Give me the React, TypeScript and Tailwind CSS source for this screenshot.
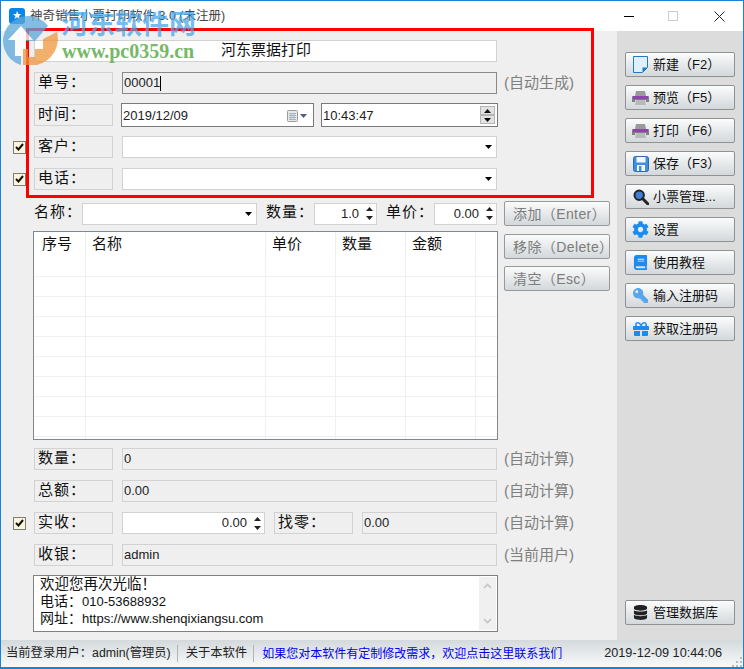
import type { ReactNode } from 'react'
import { FaCog, FaBook, FaKey, FaGift, FaDatabase } from 'react-icons/fa'

const FONT = "font-['Liberation_Sans','Noto_Sans_CJK_SC',sans-serif]"

function Caret({ className = 'text-black' }: { className?: string }) {
  return (
    <svg width="7" height="4" viewBox="0 0 7 4" className={className}>
      <path d="M0 0h7L3.5 4z" fill="currentColor" />
    </svg>
  )
}

function SpinArrows() {
  return (
    <div className="flex flex-col gap-[5px]">
      <svg width="7" height="4" viewBox="0 0 7 4"><path d="M0 4h7L3.5 0z" fill="#222" /></svg>
      <svg width="7" height="4" viewBox="0 0 7 4"><path d="M0 0h7L3.5 4z" fill="#222" /></svg>
    </div>
  )
}

function CheckBox() {
  return (
    <div className="flex h-[13px] w-[13px] items-center justify-center border border-[#7c7c7c] bg-[#fbf6d8]">
      <svg width="9" height="8" viewBox="0 0 9 8">
        <path d="M1 4l2.5 2.5L8 1" fill="none" stroke="#111" strokeWidth="2" />
      </svg>
    </div>
  )
}

function Label({ text, className = 'w-[79px]' }: { text: string; className?: string }) {
  return (
    <div className={`flex h-[22px] items-center border border-[#d2d2d2] pb-[3px] pl-[3px] text-[15px] leading-[18px] tracking-[1px] text-[#111] ${className}`}>
      {text}
    </div>
  )
}

function ReadOnly({ text = '', className = 'w-[375px]' }: { text?: string; className?: string }) {
  return (
    <div className={`flex h-[22px] items-center border border-[#d2d2d2] bg-[#efefef] pl-[1px] text-[13px] text-[#222] ${className}`}>
      {text}
    </div>
  )
}

function Combo({ className = 'w-[375px]' }: { className?: string }) {
  return (
    <div className={`flex h-[22px] items-center justify-end border border-[#d2d2d2] bg-white pr-[4px] ${className}`}>
      <Caret />
    </div>
  )
}

function Spin({ value, className }: { value: string; className: string }) {
  return (
    <div className={`flex h-[22px] items-center justify-end gap-[7px] border border-[#d2d2d2] bg-white pr-[3px] text-[13px] text-[#222] ${className}`}>
      {value}
      <SpinArrows />
    </div>
  )
}

function Hint({ text }: { text: string }) {
  return <span className="ml-[7px] whitespace-nowrap text-[15px] leading-[20px] text-[#808080]">{text}</span>
}

function Row({ check, className, children }: { check?: boolean; className: string; children: ReactNode }) {
  return (
    <div className={`flex items-center ${className}`}>
      <div className="w-[21px] shrink-0">{check && <CheckBox />}</div>
      {children}
    </div>
  )
}

function ActionButton({ text, className }: { text: string; className: string }) {
  return (
    <div className={`flex h-[25px] w-[106px] items-center whitespace-nowrap rounded-[2px] border border-[#979a9c] bg-gradient-to-b from-[#fbfbfb] to-[#d3d8db] pl-[8px] text-[14px] leading-[18px] tracking-[0.4px] text-[#7c7c7c] ${className}`}>
      {text}
    </div>
  )
}

function DocIcon() {
  return (
    <svg width="15" height="17" viewBox="0 0 15 17">
      <path d="M.5.5h14v11l-5 5h-9z" fill="#dff0fd" stroke="#2379c9" />
      <path d="M14.5 11.5l-5 5v-5z" fill="#2379c9" />
    </svg>
  )
}

function PrinterIcon() {
  return (
    <svg width="17" height="14" viewBox="0 0 17 14">
      <path d="M4 0h9l1 5H3z" fill="#9a9a9a" />
      <path d="M1 5h15a1 1 0 0 1 1 1v5h-3V9H3v2H0V6a1 1 0 0 1 1-1z" fill="#7f7f7f" />
      <path d="M1 5h15v3H1z" fill="#8e44ad" />
      <path d="M4 9h9l1 5H3z" fill="#b9b9b9" />
    </svg>
  )
}

function SaveIcon() {
  return (
    <svg width="16" height="16" viewBox="0 0 16 16">
      <rect x=".5" y=".5" width="15" height="15" rx="2" fill="#3f8fe0" stroke="#2a6db5" />
      <path d="M3.5 1h9v5.5h-9z" fill="#f4f8fc" />
      <path d="M4 9h8v6H4z" fill="#f4f8fc" />
      <path d="M6 10h2.5v5H6z" fill="#3f8fe0" />
    </svg>
  )
}

function SearchIcon() {
  return (
    <svg width="16" height="16" viewBox="0 0 16 16">
      <circle cx="6.2" cy="6.2" r="4.7" fill="#3f7fd8" stroke="#222" strokeWidth="2" />
      <path d="M9.8 9.8L15 15" stroke="#222" strokeWidth="3" strokeLinecap="round" />
    </svg>
  )
}

const BLUE = '#1a8cf0'

const sideButtons: { label: string; icon: ReactNode }[] = [
  { label: '新建（F2）', icon: <DocIcon /> },
  { label: '预览（F5）', icon: <PrinterIcon /> },
  { label: '打印（F6）', icon: <PrinterIcon /> },
  { label: '保存（F3）', icon: <SaveIcon /> },
  { label: '小票管理...', icon: <SearchIcon /> },
  { label: '设置', icon: <FaCog size={17} color={BLUE} /> },
  { label: '使用教程', icon: <FaBook size={15} color={BLUE} /> },
  { label: '输入注册码', icon: <FaKey size={15} color="#5aa6ea" className="-scale-x-100" /> },
  { label: '获取注册码', icon: <FaGift size={16} color={BLUE} /> },
]

function SideButton({ label, icon }: { label: string; icon: ReactNode }) {
  return (
    <div className="flex h-[25px] w-[110px] items-center rounded-[2px] border border-[#8f9294] bg-gradient-to-b from-[#fbfcfc] to-[#d3d8db] text-[13px] text-[#111]">
      <div className="flex w-[27px] shrink-0 justify-center pl-[2px]">{icon}</div>
      <span className="whitespace-nowrap">{label}</span>
    </div>
  )
}

function Watermark() {
  return (
    <div className="pointer-events-none absolute left-0 top-[6px] flex">
      <svg width="58" height="50" viewBox="0 0 58 50" className="mt-[8px] opacity-75">
        <path d="M47 11A25 25 0 1 0 20 50V26H34z" fill="#5aa8dc" />
        <path d="M20 11L7 25h7v16h11V25h7z" fill="#ffffff" />
        <path d="M22 50V34h5v8h7V34h8V24l14-7a27 27 0 0 1-20 33z" fill="#f0963c" />
      </svg>
      <div className="ml-[2px] flex flex-col">
        <span className="mt-[2px] h-[32px] whitespace-nowrap font-['Liberation_Serif','Noto_Sans_CJK_SC',serif] text-[27px] font-bold leading-[32px] text-[#45a8ea] opacity-75">
          河东软件网
        </span>
        <span className="ml-[1px] whitespace-nowrap font-['Liberation_Serif',serif] text-[20px] font-bold leading-[20px] text-[#77b868]">
          www.pc0359.cn
        </span>
      </div>
    </div>
  )
}

export default function App() {
  const rows = Array.from({ length: 10 })
  return (
    <div className={`relative flex h-[669px] w-[744px] flex-col overflow-hidden border border-b-2 border-[#1683d8] bg-white ${FONT}`}>
      <div className="flex h-[30px] shrink-0 items-center bg-white pl-[8px]">
        <div className="flex h-[16px] w-[16px] items-center justify-center rounded-[3px] bg-[#0a84e8] text-[9px] text-white">★</div>
        <span className="ml-[5px] text-[12.5px] text-[#444]">神奇销售小票打印软件 3.0 (未注册)</span>
        <div className="ml-auto flex items-center">
          <div className="h-px w-[10px] bg-black" />
          <div className="ml-[34px] h-[10px] w-[10px] border border-[#cccccc]" />
          <svg width="11" height="11" viewBox="0 0 11 11" className="ml-[36px] mr-[18px]">
            <path d="M.5.5l10 10M10.5.5l-10 10" stroke="#222" strokeWidth="1" />
          </svg>
        </div>
      </div>

      <div className="flex min-h-0 flex-1">
        <div className="w-[616px] shrink-0 bg-[#efefef] pl-[12px] pt-[9px]">
          <Row className="">
            <div className="flex h-[22px] w-[463px] items-center border border-[#d2d2d2] bg-white pb-[3px] pl-[186px] text-[15px] leading-[18px] text-[#111]">
              河东票据打印
            </div>
          </Row>

          <Row className="mt-[10px]">
            <Label text="单号：" />
            <div className="ml-[9px] flex h-[22px] w-[375px] items-center border border-[#8a8a8a] bg-[#efefef] pl-[1px] text-[13px] text-[#222]">
              00001<span className="h-[15px] w-px bg-black" />
            </div>
            <Hint text="(自动生成)" />
          </Row>

          <Row className="mt-[9px]">
            <Label text="时间：" />
            <div className="ml-[8px] flex h-[24px] w-[193px] items-center border border-[#7a7a7a] bg-white pl-[1px] pt-[1px] text-[13px] text-[#222]">
              2019/12/09
              <svg width="11" height="12" viewBox="0 0 11 12" className="ml-auto">
                <rect x=".5" y=".5" width="10" height="11" rx="1" fill="#e8e8e8" stroke="#9a9a9a" />
                <path d="M2 3.5h7M2 5.5h7M2 7.5h7M2 9.5h7M4 3v7M7 3v7" stroke="#a8b4c4" strokeWidth="1" />
              </svg>
              <Caret className="ml-[2px] mr-[6px] text-[#4e5f80]" />
            </div>
            <div className="ml-[7px] flex h-[24px] w-[177px] items-center justify-between border border-[#7a7a7a] bg-white pl-[1px] pr-[2px] text-[13px] text-[#222]">
              <span className="pt-[1px]">10:43:47</span>
              <div className="flex flex-col">
                <div className="flex h-[9px] w-[15px] items-center justify-center border border-[#b4b4b4] bg-[#e2e2e2]">
                  <svg width="7" height="4" viewBox="0 0 7 4"><path d="M0 4h7L3.5 0z" fill="#111" /></svg>
                </div>
                <div className="flex h-[9px] w-[15px] items-center justify-center border border-[#b4b4b4] bg-[#e2e2e2]">
                  <Caret />
                </div>
              </div>
            </div>
          </Row>

          <Row check className="mt-[9px]">
            <Label text="客户：" />
            <Combo className="ml-[9px] w-[375px]" />
          </Row>

          <Row check className="mt-[10px]">
            <Label text="电话：" />
            <Combo className="ml-[9px] w-[375px]" />
          </Row>

          <Row className="mt-[11px]">
            <span className="w-[48px] whitespace-nowrap pb-[3px] text-[15px] leading-[18px] tracking-[1px] text-[#111]">名称：</span>
            <Combo className="w-[175px]" />
            <span className="ml-[9px] w-[48px] whitespace-nowrap pb-[3px] text-[15px] leading-[18px] tracking-[1px] text-[#111]">数量：</span>
            <Spin value="1.0" className="w-[63px]" />
            <span className="ml-[9px] w-[48px] whitespace-nowrap pb-[3px] text-[15px] leading-[18px] tracking-[1px] text-[#111]">单价：</span>
            <Spin value="0.00" className="w-[63px]" />
            <ActionButton text="添加（Enter）" className="ml-[7px]" />
          </Row>

          <div className="flex">
            <div className="ml-[20px] mt-[5px] h-[209px] w-[465px] overflow-hidden border border-[#80878d] bg-white">
              <div className="grid h-[25px] grid-cols-[52px_180px_70px_70px_70px_22px] text-[15px] text-[#111]">
                {['序号', '名称', '单价', '数量', '金额', ''].map((h, i) => (
                  <div key={i} className={`leading-[24px] ${i === 0 ? 'pl-[8px]' : 'pl-[6px]'} ${i < 5 ? 'border-r border-[#eeeeee]' : ''}`}>
                    {h}
                  </div>
                ))}
              </div>
              {rows.map((_, r) => (
                <div key={r} className="grid h-[20px] grid-cols-[52px_180px_70px_70px_70px_22px] border-b border-[#f0f0f0]">
                  {[0, 1, 2, 3, 4].map((c) => (
                    <div key={c} className="border-r border-[#f0f0f0]" />
                  ))}
                </div>
              ))}
            </div>
            <div className="ml-[6px] flex flex-col gap-[7px] pt-[8px]">
              <ActionButton text="移除（Delete）" className="" />
              <ActionButton text="清空（Esc）" className="" />
            </div>
          </div>

          <Row className="mt-[8px]">
            <Label text="数量：" />
            <ReadOnly text="0" className="ml-[9px] w-[375px]" />
            <Hint text="(自动计算)" />
          </Row>
          <Row className="mt-[10px]">
            <Label text="总额：" />
            <ReadOnly text="0.00" className="ml-[9px] w-[375px]" />
            <Hint text="(自动计算)" />
          </Row>
          <Row check className="mt-[10px]">
            <Label text="实收：" />
            <Spin value="0.00" className="ml-[9px] w-[143px]" />
            <Label text="找零：" className="ml-[9px] w-[79px]" />
            <ReadOnly text="0.00" className="ml-[9px] w-[135px]" />
            <Hint text="(自动计算)" />
          </Row>
          <Row className="mt-[10px]">
            <Label text="收银：" />
            <ReadOnly text="admin" className="ml-[9px] w-[375px]" />
            <Hint text="(当前用户)" />
          </Row>

          <div className="ml-[20px] mt-[9px] flex h-[57px] w-[465px] justify-between border border-[#808080] bg-white pl-[6px]">
            <div className="text-[13px] leading-[17px] text-[#111]">
              <div className="text-[14.5px]">欢迎您再次光临！</div>
              <div><span className="text-[14px]">电话：</span>010-53688932</div>
              <div><span className="text-[14px]">网址：</span>https://www.shenqixiangsu.com</div>
            </div>
            <div className="mr-[1px] mt-[1px] flex h-[53px] w-[17px] flex-col items-center justify-between bg-[#f0f0f0] py-[6px]">
              <svg width="9" height="6" viewBox="0 0 9 6"><path d="M1 5l3.5-3.5L8 5" fill="none" stroke="#c4c4c4" strokeWidth="1.6" /></svg>
              <svg width="9" height="6" viewBox="0 0 9 6"><path d="M1 1l3.5 3.5L8 1" fill="none" stroke="#c4c4c4" strokeWidth="1.6" /></svg>
            </div>
          </div>
        </div>

        <div className="flex flex-1 flex-col bg-[#dcdcdc] pl-[8px] pt-[21px]">
          <div className="flex flex-col gap-[8px]">
            {sideButtons.map((b) => (
              <SideButton key={b.label} label={b.label} icon={b.icon} />
            ))}
          </div>
          <div className="mb-[15px] mt-auto">
            <SideButton label="管理数据库" icon={<FaDatabase size={15} color="#222" />} />
          </div>
        </div>
      </div>

      <div className="relative flex h-[27px] shrink-0 items-center bg-gradient-to-b from-[#d4d9dc] to-[#f8fafa] pl-[5px] text-[12.3px] text-[#222]">
        <span className="whitespace-nowrap">当前登录用户：admin(管理员)</span>
        <div className="ml-[6px] h-[17px] w-px bg-[#b4b4b4]" />
        <span className="ml-[8px] whitespace-nowrap">关于本软件</span>
        <div className="ml-[6px] h-[17px] w-px bg-[#b4b4b4]" />
        <span className="ml-[8px] whitespace-nowrap text-[12px] text-[#0000ee]">如果您对本软件有定制修改需求，欢迎点击这里联系我们</span>
        <span className="ml-auto mr-[21px] whitespace-nowrap text-[12.7px]">2019-12-09 10:44:06</span>
        <svg width="10" height="10" viewBox="0 0 10 10" className="absolute bottom-0 right-[1px]">
          <path d="M8 0h2v2H8zM4 4h2v2H4zM8 4h2v2H8zM0 8h2v2H0zM4 8h2v2H4zM8 8h2v2H8z" fill="#b8bcbf" />
        </svg>
      </div>

      <div className="pointer-events-none absolute left-[25px] top-[27px] h-[170px] w-[568px] border-[3px] border-[#ff0000]" />
      <Watermark />
    </div>
  )
}
